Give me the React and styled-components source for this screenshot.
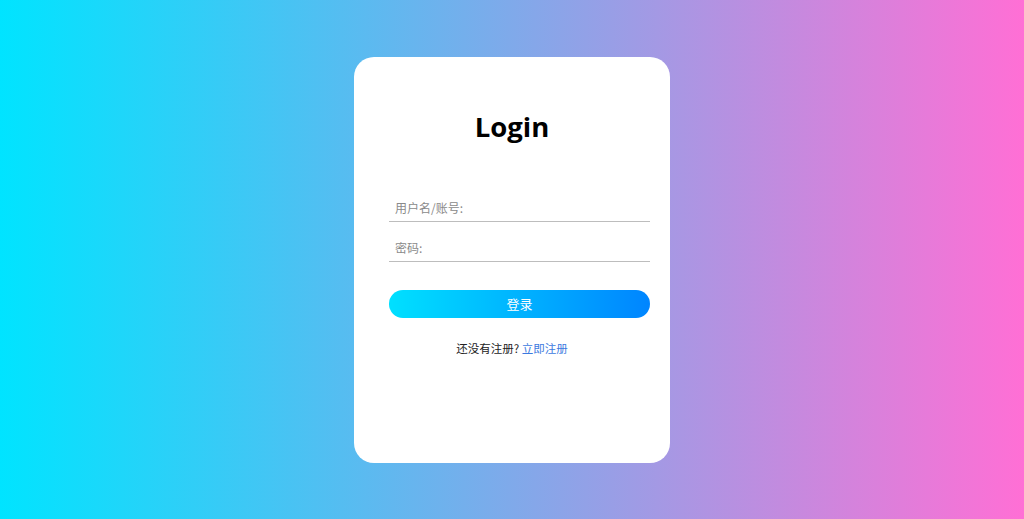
import React from 'react';
import styled, { createGlobalStyle } from 'styled-components';

const GlobalStyle = createGlobalStyle`
  html, body {
    margin: 0;
    padding: 0;
    height: 100%;
  }
  body {
    font-family: "Noto Sans", "Noto Sans CJK SC", sans-serif;
  }
  #root {
    height: 100%;
  }
`;

const Page = styled.div`
  height: 519px;
  display: flex;
  align-items: center;
  justify-content: center;
  background-image: linear-gradient(to right, #00e4ff, #ff6fd5);
`;

const Card = styled.div`
  width: 316px;
  height: 406px;
  box-sizing: border-box;
  background: #fff;
  border-radius: 20px;
  padding: 0 20px 0 35px;
  display: flex;
  flex-direction: column;
`;

const Title = styled.h1`
  margin: 50px 0 0 -15px;
  height: 40px;
  line-height: 40px;
  text-align: center;
  font-family: "Open Sans", "Noto Sans", sans-serif;
  font-size: 27.5px;
  font-weight: 700;
  color: #000;
`;

const Form = styled.div`
  margin-top: 46px;
  display: flex;
  flex-direction: column;
  gap: 11px;
`;

const Input = styled.input`
  display: block;
  width: 100%;
  height: 29px;
  box-sizing: border-box;
  padding: 2px 6px 0;
  border: none;
  border-bottom: 1px solid #bdbdbd;
  outline: none;
  font-family: "Noto Sans CJK SC", sans-serif;
  font-size: 12px;
  color: #333;

  &::placeholder {
    color: #8a8a8a;
  }
`;

const Button = styled.button`
  margin-top: 28px;
  height: 28px;
  border: none;
  border-radius: 14px;
  background-image: linear-gradient(to right, #00e0ff, #0085ff);
  color: #fff;
  font-family: "Noto Sans CJK SC", sans-serif;
  font-size: 13px;
  cursor: pointer;
`;

const Message = styled.p`
  margin: 22px 0 0 -15px;
  text-align: center;
  font-family: "Noto Sans CJK SC", sans-serif;
  font-size: 11.5px;
  color: #222;
`;

const Link = styled.a`
  color: #3c7ae0;
  text-decoration: none;
`;

export default function App() {
  return (
    <>
      <GlobalStyle />
      <Page>
        <Card>
          <Title>Login</Title>
          <Form>
            <Input type="text" placeholder="用户名/账号:" />
            <Input type="password" placeholder="密码:" />
          </Form>
          <Button type="button">登录</Button>
          <Message>
            还没有注册? <Link href="#">立即注册</Link>
          </Message>
        </Card>
      </Page>
    </>
  );
}
